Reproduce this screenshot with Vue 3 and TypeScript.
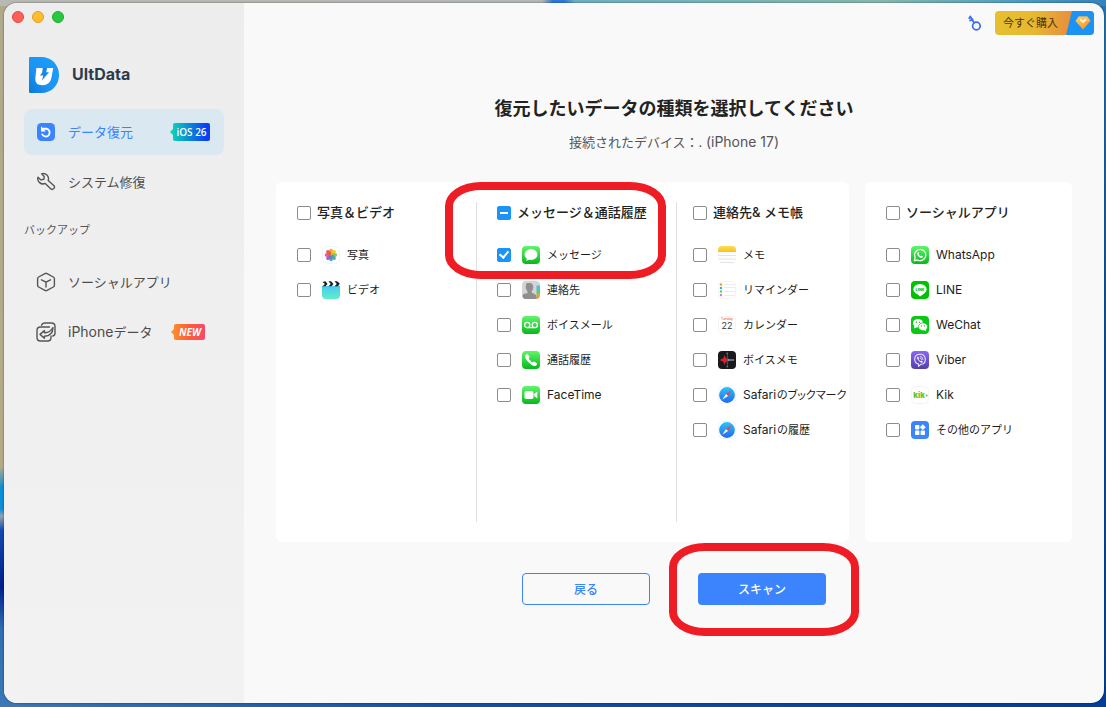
<script setup lang="ts">
import { reactive } from 'vue'

interface Item {
  id: string
  label: string
  latin?: string
  compact?: boolean
  checked: boolean
}
interface Group {
  id: string
  title: string
  partial: boolean
  marked: boolean
  items: Item[]
}

const item = (id: string, label: string, latin = '', checked = false, compact = false): Item => ({
  id,
  label,
  latin,
  checked,
  compact,
})

const cards = reactive<{ id: string; groups: Group[] }[]>([
  {
    id: 'device',
    groups: [
      {
        id: 'media',
        title: '写真＆ビデオ',
        partial: false,
        marked: false,
        items: [item('photos', '写真'), item('videos', 'ビデオ')],
      },
      {
        id: 'calls',
        title: 'メッセージ＆通話履歴',
        partial: true,
        marked: true,
        items: [
          item('messages', 'メッセージ', '', true),
          item('contacts', '連絡先'),
          item('voicemail', 'ボイスメール'),
          item('phone', '通話履歴'),
          item('facetime', '', 'FaceTime'),
        ],
      },
      {
        id: 'notes',
        title: '連絡先& メモ帳',
        partial: false,
        marked: false,
        items: [
          item('memo', 'メモ'),
          item('reminders', 'リマインダー'),
          item('calendar', 'カレンダー'),
          item('voicememo', 'ボイスメモ'),
          item('bookmarks', 'のブックマーク', 'Safari', false, true),
          item('history', 'の履歴', 'Safari'),
        ],
      },
    ],
  },
  {
    id: 'social',
    groups: [
      {
        id: 'apps',
        title: 'ソーシャルアプリ',
        partial: false,
        marked: false,
        items: [
          item('whatsapp', '', 'WhatsApp'),
          item('line', '', 'LINE'),
          item('wechat', '', 'WeChat'),
          item('viber', '', 'Viber'),
          item('kik', '', 'Kik'),
          item('others', 'その他のアプリ'),
        ],
      },
    ],
  },
])

const petals = [
  { angle: 0, color: '#f9a11b' },
  { angle: 45, color: '#e8c81e' },
  { angle: 90, color: '#8cc63f' },
  { angle: 135, color: '#3fae8a' },
  { angle: 180, color: '#4a8fe0' },
  { angle: 225, color: '#8a5fc4' },
  { angle: 270, color: '#d8589c' },
  { angle: 315, color: '#f0533a' },
]
</script>

<template>
  <div class="desktop">
    <svg class="defs" width="0" height="0" aria-hidden="true">
      <defs>
        <linearGradient id="green" x1="0" y1="0" x2="0" y2="1">
          <stop offset="0" stop-color="#62f56c" />
          <stop offset="1" stop-color="#08b81c" />
        </linearGradient>
        <linearGradient id="violet" x1="0" y1="0" x2="0" y2="1">
          <stop offset="0" stop-color="#8a66f5" />
          <stop offset="1" stop-color="#553fa8" />
        </linearGradient>
        <linearGradient id="sky" x1="0" y1="0" x2="0" y2="1">
          <stop offset="0" stop-color="#2cc4fb" />
          <stop offset="1" stop-color="#2269ee" />
        </linearGradient>
        <linearGradient id="aqua" x1="0" y1="0" x2="0" y2="1">
          <stop offset="0" stop-color="#4cc8f0" />
          <stop offset="1" stop-color="#5cf0c8" />
        </linearGradient>
        <linearGradient id="yellow" x1="0" y1="0" x2="0" y2="1">
          <stop offset="0" stop-color="#ffdc50" />
          <stop offset="1" stop-color="#fbc31c" />
        </linearGradient>
        <linearGradient id="brand" x1="1" y1="0" x2="0" y2="1">
          <stop offset="0" stop-color="#1ba0fb" />
          <stop offset="0.6" stop-color="#1b93f5" />
          <stop offset="1" stop-color="#0d78d8" />
        </linearGradient>
        <linearGradient id="gem" x1="0" y1="0" x2="1" y2="1">
          <stop offset="0" stop-color="#ffd35c" />
          <stop offset="1" stop-color="#f58a1c" />
        </linearGradient>
      </defs>
    </svg>

    <div class="window">
      <aside class="sidebar">
        <div class="lights">
          <button type="button" class="light red" aria-label="閉じる"></button>
          <button type="button" class="light amber" aria-label="しまう"></button>
          <button type="button" class="light lime" aria-label="拡大"></button>
        </div>

        <div class="brand">
          <svg width="30" height="36" viewBox="0 0 30 36" aria-hidden="true">
            <path d="M1 0H12C23 0 30 8 30 18S23 36 12 36H1Q0 36 0 35V1Q0 0 1 0Z" fill="url(#brand)" />
            <path
              d="M7.400 11H24.200L22.400 21Q20.800 28.300 13.600 28.300 5.800 28.300 6.300 21.500Z"
              fill="#fff"
            />
            <path d="M13.800 10.500H18.200L17.200 15.200H20L12.800 23.800 14.400 18.600H11L13.200 15.500Z" fill="#1788e8" />
          </svg>
          <span>UltData</span>
        </div>

        <nav class="nav">
          <a href="#recover" class="nav-item active">
            <svg width="20" height="20" viewBox="0 0 20 20" aria-hidden="true">
              <rect x="1" y="1" width="18" height="18" rx="4.500" fill="#3b84fe" />
              <path d="M7 6.800H10.500A3.900 3.900 0 1 1 6.300 12.400" fill="none" stroke="#fff" stroke-width="1.900" stroke-linecap="round" />
              <path d="M5 4.200V9.400H9.800Z" fill="#fff" />
            </svg>
            <span class="nav-text">データ復元</span>
            <span class="tag ios">iOS 26</span>
          </a>
          <a href="#repair" class="nav-item">
            <svg width="20" height="20" viewBox="0 0 20 20" class="line-icon" aria-hidden="true">
              <path
                d="M5.600 1.800A5.200 5.200 0 0 1 12.200 8.400L18 13.700Q19 14.900 18 16.400 16.700 17.900 15.200 17.200L9.200 11.400A5.200 5.200 0 0 1 2 5.200L4.900 7.900 7.900 7.200 8.200 4.500Z"
              />
            </svg>
            <span class="nav-text">システム修復</span>
          </a>
          <h2 class="section">バックアップ</h2>
          <a href="#social" class="nav-item">
            <svg width="20" height="20" viewBox="0 0 20 20" class="line-icon" aria-hidden="true">
              <path d="M8.900 1.600Q10 1 11.100 1.600L17.300 5Q18.400 5.600 18.400 6.800V13.200Q18.400 14.400 17.300 15L11.100 18.400Q10 19 8.900 18.400L2.700 15Q1.600 14.400 1.600 13.200V6.800Q1.600 5.600 2.700 5Z" />
              <path d="M5.500 7.800L10 10.200 14.500 7.800M10 10.200V15" />
            </svg>
            <span class="nav-text">ソーシャルアプリ</span>
          </a>
          <a href="#iphone" class="nav-item">
            <svg width="20" height="20" viewBox="0 0 20 20" class="line-icon" aria-hidden="true">
              <path d="M5.500 3.200Q6.200 1 8.500 1H15.500Q19 1 19 4.500V11Q19 13.500 16.800 14" />
              <path d="M13.500 5H4.500Q1 5 1 8.500V15.500Q1 19 4.500 19H11.500Q15 19 15 15.500V14" />
              <path d="M4 12.400L8.400 8.600V10.700Q13.800 11 17 5.500 16.800 14 8.400 14.200V16.200Z" />
            </svg>
            <span class="nav-text"><span class="latin">iPhone</span>データ</span>
            <span class="tag new">NEW</span>
          </a>
        </nav>
      </aside>

      <main class="main">
        <header class="toolbar">
          <button type="button" class="key" aria-label="登録">
            <svg width="16" height="18" viewBox="0 0 16 18" aria-hidden="true">
              <g fill="none" stroke="#3a6df0" stroke-width="1.700" stroke-linecap="round">
                <circle cx="9.400" cy="12" r="3.800" />
                <path d="M7 8.800L3.300 2.500M3.300 2.500L2.200 4.300M5.700 5.200L3 6.600" />
              </g>
            </svg>
          </button>
          <button type="button" class="buy">
            <span class="buy-text">今すぐ購入</span>
            <span class="buy-gem">
              <svg width="16" height="14" viewBox="0 0 16 14" aria-hidden="true">
                <path d="M3.600 0.500H12.400L15.500 5 8 13.500 0.500 5Z" fill="url(#gem)" />
                <path d="M3.600 0.500H12.400L15.500 5H11L8 8Z" fill="#ffc46a" opacity="0.600" />
                <path d="M5.500 3.600L8 6 10.500 3.600" fill="none" stroke="#fff" stroke-width="1.500" stroke-linecap="round" />
              </svg>
            </span>
          </button>
        </header>

        <h1>復元したいデータの種類を選択してください</h1>
        <p class="subtitle">接続されたデバイス：. <span class="latin">(iPhone 17)</span></p>

        <div class="cards">
          <section v-for="card in cards" :key="card.id" class="card" :class="card.id">
            <div v-for="group in card.groups" :key="group.id" class="group" :class="group.id">
              <label class="row head">
                <input type="checkbox" :indeterminate.prop="group.partial" />
                <span class="title">{{ group.title }}</span>
              </label>
              <label v-for="entry in group.items" :key="entry.id" class="row">
                <input v-model="entry.checked" type="checkbox" />
                <svg class="app" width="18" height="18" viewBox="0 0 18 18" aria-hidden="true">
                  <g v-if="entry.id === 'photos'">
                    <rect x="0.500" y="0.500" width="17" height="17" rx="4" fill="#fff" stroke="#f4f4f4" />
                    <ellipse
                      v-for="petal in petals"
                      :key="petal.angle"
                      cx="9"
                      cy="5.700"
                      rx="1.900"
                      ry="2.900"
                      :fill="petal.color"
                      opacity="0.920"
                      :transform="`rotate(${petal.angle} 9 9)`"
                    />
                  </g>
                  <g v-else-if="entry.id === 'videos'">
                    <path d="M0 5H18V14Q18 18 14 18H4Q0 18 0 14Z" fill="url(#aqua)" />
                    <path d="M0 3Q0 0 3 0H15Q18 0 18 3V5H0Z" fill="#fff" />
                    <path d="M0.500 1L3.500 0.300 5.500 3 3.500 5.300H0.500L3 3ZM6.500 0.300H9L11.500 3 9.500 5.300H6.500L8.800 3ZM12.500 0.300H15L17.800 2.500 16 5.300H12.500L14.800 3Z" fill="#1c1c1c" />
                  </g>
                  <g v-else-if="entry.id === 'messages'">
                    <rect width="18" height="18" rx="4" fill="url(#green)" />
                    <ellipse cx="9" cy="8.500" rx="6.500" ry="5.400" fill="#fff" />
                    <path d="M4.800 11.500Q5.200 13.800 3.800 14.800 6.300 14.800 7.500 13Z" fill="#fff" />
                  </g>
                  <g v-else-if="entry.id === 'contacts'">
                    <rect width="18" height="18" rx="4" fill="#d4d4d4" />
                    <path d="M14.500 4.500H18V9H14.500Z" fill="#52b8f0" />
                    <path d="M14.500 9H18V13.500H14.500Z" fill="#58cf68" />
                    <path d="M14.500 13.500H18V14Q18 17 14.500 18Z" fill="#f79a20" />
                    <path d="M7.500 2C10.300 2 11.400 4 11.300 6.400 11.200 8.600 9.700 9.800 9.500 11 9.400 12.300 13.500 12.300 14.500 15V18H4Q0.500 18 0.500 14.500 1.500 12.300 5.500 12.300 5.400 11 5.300 9.800 3.800 8.600 3.700 6.400 3.600 4 4.700 2 7.500 2Z" fill="#8f8f8f" />
                  </g>
                  <g v-else-if="entry.id === 'voicemail'">
                    <rect width="18" height="18" rx="4" fill="url(#green)" />
                    <g fill="none" stroke="#fff" stroke-width="1.300">
                      <circle cx="5.200" cy="9" r="2.600" />
                      <circle cx="12.800" cy="9" r="2.600" />
                      <path d="M5.200 11.600H12.800" />
                    </g>
                  </g>
                  <g v-else-if="entry.id === 'phone'">
                    <rect width="18" height="18" rx="4" fill="url(#green)" />
                    <path d="M4 3.500Q5.200 2.500 6.200 3.700L7.400 5.500Q7.800 6.300 7 7.100 6.600 7.700 7.200 8.500L9.800 11Q10.500 11.500 11.200 11 11.900 10.300 12.700 10.800L14.500 12Q15.600 12.900 14.600 14 13 15.800 9.700 13.900 6 11.700 4 8.300 2.400 5.200 4 3.500Z" fill="#fff" />
                  </g>
                  <g v-else-if="entry.id === 'facetime'">
                    <rect width="18" height="18" rx="4" fill="url(#green)" />
                    <rect x="2.500" y="5" width="9" height="8" rx="1.800" fill="#fff" />
                    <path d="M12.200 8L15.300 5.600V12.400L12.200 10Z" fill="#fff" />
                  </g>
                  <g v-else-if="entry.id === 'memo'">
                    <path d="M0 5H18V14Q18 18 14 18H4Q0 18 0 14Z" fill="#fdfdfd" />
                    <path d="M0 6V4Q0 0 4 0H14Q18 0 18 4V6Z" fill="url(#yellow)" />
                    <path d="M0 9.500H18M0 13H18M2 16.500H16" stroke="#e4e4e4" />
                  </g>
                  <g v-else-if="entry.id === 'reminders'">
                    <rect x="0.500" y="0.500" width="17" height="17" rx="4" fill="#fff" stroke="#f4f4f4" />
                    <path d="M6 3.500H17M6 6.500H17M6 10.500H17M6 14.500H17" stroke="#ececec" />
                    <circle cx="3" cy="3.500" r="1.200" fill="#f59a23" />
                    <circle cx="3" cy="7" r="1.200" fill="#35a9f0" />
                    <circle cx="3" cy="10.500" r="1.200" fill="#5fd04a" />
                    <circle cx="3" cy="14" r="1.200" fill="#cc7be6" />
                  </g>
                  <g v-else-if="entry.id === 'calendar'">
                    <rect x="0.500" y="0.500" width="17" height="17" rx="4" fill="#fff" stroke="#f4f4f4" />
                    <text x="9" y="4" text-anchor="middle" class="cal-day">Tuesday</text>
                    <text x="9" y="13" text-anchor="middle" class="cal-num">22</text>
                  </g>
                  <g v-else-if="entry.id === 'voicememo'">
                    <rect width="18" height="18" rx="4" fill="#1a1a1c" />
                    <path d="M2 9L4 7.500 5 8 6.500 4 7.500 6.500 9 8V10L7.500 11.500 6.500 14 5 10 4 10.500Z" fill="#e0222c" />
                    <path d="M9.500 7.500L12 8.300H16V9.700H12L9.500 10.500Z" fill="#8a8a8e" />
                    <path d="M9.300 2V16" stroke="#2b7f98" stroke-width="0.800" />
                    <circle cx="9.300" cy="2.200" r="0.800" fill="#2b9fb8" />
                    <circle cx="9.300" cy="15.800" r="0.800" fill="#2b9fb8" />
                  </g>
                  <g v-else-if="entry.id === 'bookmarks' || entry.id === 'history'">
                    <rect x="0.500" y="0.500" width="17" height="17" rx="4" fill="#fff" stroke="#f4f4f4" />
                    <circle cx="9" cy="9" r="7.900" fill="url(#sky)" />
                    <path d="M13.700 4.300L8 8 10 10Z" fill="#f2413a" />
                    <path d="M4.300 13.700L8 8 10 10Z" fill="#fff" />
                  </g>
                  <g v-else-if="entry.id === 'whatsapp'">
                    <rect width="18" height="18" rx="4" fill="url(#green)" />
                    <path d="M3.200 14.800L4.200 11.600A5.600 5.600 0 1 1 6.400 13.900Z" fill="none" stroke="#fff" stroke-width="1.200" stroke-linejoin="round" />
                    <path d="M6.600 6.200Q7.300 5.600 7.700 6.400L8.100 7.500 7.600 8.300Q8.300 9.700 9.700 10.300L10.500 9.600 11.800 10.200Q12.200 10.700 11.600 11.400 10.300 12.500 8.100 10.900 5.100 8.200 6.600 6.200Z" fill="#fff" />
                  </g>
                  <g v-else-if="entry.id === 'line'">
                    <rect width="18" height="18" rx="4" fill="#00c200" />
                    <ellipse cx="9" cy="8.300" rx="6.600" ry="5.200" fill="#fff" />
                    <path d="M5.500 12L9 15.500Q13 13.200 14.500 10.500Z" fill="#fff" />
                    <text x="9" y="9.700" text-anchor="middle" class="line-mark">LINE</text>
                  </g>
                  <g v-else-if="entry.id === 'wechat'">
                    <rect width="18" height="18" rx="4" fill="#0ac814" />
                    <ellipse cx="7" cy="7.300" rx="5" ry="4.200" fill="#fff" />
                    <path d="M3.500 9.500L3 12.500 6 11Z" fill="#fff" />
                    <ellipse cx="12" cy="10.800" rx="4.600" ry="3.900" fill="#fff" stroke="#0ac814" stroke-width="0.700" />
                    <path d="M13 14L15 15.300 14.800 13Z" fill="#fff" />
                    <circle cx="5.400" cy="6.200" r="0.700" fill="#0ac814" />
                    <circle cx="8.600" cy="6.200" r="0.700" fill="#0ac814" />
                    <circle cx="10.600" cy="9.900" r="0.600" fill="#0ac814" />
                    <circle cx="13.400" cy="9.900" r="0.600" fill="#0ac814" />
                  </g>
                  <g v-else-if="entry.id === 'viber'">
                    <rect width="18" height="18" rx="4" fill="url(#violet)" />
                    <path d="M9 3.200C13.300 3.200 14.300 5 14.300 8.300S13 13.300 9.800 13.300L7.600 15.300V13.100C4.600 12.500 3.700 11.200 3.700 8.300S5 3.200 9 3.200Z" fill="none" stroke="#e9e2ff" stroke-width="1.100" stroke-linejoin="round" />
                    <path d="M6.300 6Q7 5.300 7.500 6.200L8 7.200 7.400 8Q8 9.500 9.600 10.200L10.400 9.600 11.700 10.500Q12 11.100 11.300 11.600 10 12 8 10 5.500 7.500 6.300 6Z" fill="#fff" />
                    <path d="M9.200 5.400Q12 5.600 12.100 8.600M9.300 7Q10.500 7.100 10.600 8.500" fill="none" stroke="#fff" stroke-width="0.700" stroke-linecap="round" />
                  </g>
                  <g v-else-if="entry.id === 'kik'">
                    <rect x="0.500" y="0.500" width="17" height="17" rx="4" fill="#fff" stroke="#f4f4f4" />
                    <text x="8.200" y="12" text-anchor="middle" class="kik-mark">kik</text>
                    <circle cx="15.600" cy="9.500" r="1" fill="#62c11c" />
                  </g>
                  <g v-else>
                    <rect width="18" height="18" rx="4" fill="#3b84fe" />
                    <rect x="4" y="4" width="4.400" height="4.400" rx="0.800" fill="#fff" />
                    <rect x="4" y="9.600" width="4.400" height="4.400" rx="0.800" fill="#fff" />
                    <rect x="9.600" y="9.600" width="4.400" height="4.400" rx="0.800" fill="#fff" />
                    <path d="M11.800 3.300L14.700 6.200 11.800 9.100 8.900 6.200Z" fill="#fff" />
                  </g>
                </svg>
                <span class="name" :class="{ compact: entry.compact }">
                  <span v-if="entry.latin" class="latin">{{ entry.latin }}</span>{{ entry.label }}
                </span>
              </label>
              <span v-if="group.marked" class="ring around-group"></span>
            </div>
          </section>
        </div>

        <footer class="actions">
          <button type="button" class="btn ghost">戻る</button>
          <button type="button" class="btn primary">
            スキャン
            <span class="ring around-button"></span>
          </button>
        </footer>
      </main>
    </div>
  </div>
</template>

<style>
html,
body {
  margin: 0;
}
</style>

<style scoped>
* {
  box-sizing: border-box;
}
.desktop {
  min-height: 100vh;
  display: flex;
  padding: 3px 2px 4px 4px;
  font-family: Inter, 'Noto Sans CJK JP', sans-serif;
  color: #222;
  background:
    linear-gradient(to right, #b9b9b3, #b4b8b6 49%, #2f78d8 50%, #2f78d8 51%, #6fb0c0 52%, #86b8ac 80%, #4f9fc0 92%, #3583bd) top / 100% 6px no-repeat,
    linear-gradient(to bottom, #b0aa8c, #b5ab85 66%, #0a8fd8 69%, #0a8fd8 72%, #93a5ac 73%, #1549b4 75%, #001f8e 83%, #2f6fb4 89%, #3a78b8) left / 20px 100% no-repeat,
    linear-gradient(to right, #3a78b8, #1452a8 40%, #013d9c) bottom / 100% 20px no-repeat,
    linear-gradient(to bottom, #2477b4, #0a4fa0 50%, #03449c);
}
.defs {
  position: absolute;
}
button {
  font-family: inherit;
  padding: 0;
  border: 0;
  background: none;
  cursor: pointer;
}
.window {
  flex: 1;
  display: flex;
  border-radius: 13px;
  overflow: hidden;
  background: #f9f9f9;
  box-shadow: 0 0 2px rgba(0, 0, 0, 0.6);
}
.sidebar {
  width: 240px;
  flex: none;
  padding: 8px 20px;
  background: linear-gradient(#ededed, #f2f2f2);
}
.lights {
  display: flex;
  gap: 8px;
  margin-left: -12px;
}
.light {
  width: 12px;
  height: 12px;
  border-radius: 50%;
  border: 1px solid;
}
.red {
  background: #ff5f57;
  border-color: #e2463f;
}
.amber {
  background: #febc2e;
  border-color: #e0a023;
}
.lime {
  background: #28c840;
  border-color: #1dad2b;
}
.brand {
  display: flex;
  align-items: center;
  gap: 13px;
  height: 36px;
  margin: 34px 0 16px 5px;
  font-size: 16px;
  line-height: 20px;
  font-weight: 700;
  color: #2b3c4e;
}
.brand span,
.title {
  padding-bottom: 2px;
}
.nav {
  display: flex;
  flex-direction: column;
  gap: 4px;
}
.nav-item {
  display: flex;
  align-items: center;
  height: 46px;
  padding: 0 14px 0 12px;
  border-radius: 8px;
  font-size: 13px;
  line-height: 20px;
  color: #4c4c4c;
  text-decoration: none;
}
.nav-item.active {
  background: #d9e8f1;
  color: #3b84fe;
}
.nav-text {
  margin-left: 12px;
  white-space: nowrap;
}
.nav-text .latin,
.subtitle .latin {
  font-size: 14px;
}
.line-icon {
  fill: none;
  stroke: #555;
  stroke-width: 1.4;
  stroke-linejoin: round;
  stroke-linecap: round;
}
.section {
  margin: 0;
  height: 46px;
  line-height: 42px;
  font-size: 11px;
  font-weight: 400;
  color: #555;
}
.tag {
  position: relative;
  color: #fff;
  text-align: center;
  border-radius: 2px;
  font-family: 'Open Sans', sans-serif;
  font-size: 10px;
  font-weight: 600;
}
.tag::before {
  content: '';
  position: absolute;
  left: -3px;
  top: 50%;
  margin-top: -3px;
  border: 3px solid transparent;
  border-left: 0;
}
.ios {
  margin-left: auto;
  width: 37px;
  height: 18px;
  line-height: 18px;
  background: linear-gradient(to right, #0ccfb8, #0a3ff5 90%);
}
.ios::before {
  border-right-color: #0ccfb8;
}
.new {
  margin-left: 22px;
  width: 31px;
  height: 16px;
  line-height: 16px;
  font-style: italic;
  font-weight: 700;
  background: linear-gradient(to right, #fd8a2b, #fd5a3c 50%, #fb4a68);
}
.new::before {
  border-right-color: #fd8a2b;
}
.main {
  flex: 1;
  min-width: 0;
  padding: 8px 32px 32px;
  display: flex;
  flex-direction: column;
}
.toolbar {
  display: flex;
  justify-content: flex-end;
  align-items: center;
  gap: 12px;
  margin-right: -22px;
}
.key {
  width: 16px;
  height: 18px;
}
.key svg {
  display: block;
}
.buy {
  display: flex;
  width: 99px;
  height: 24px;
  border-radius: 4px;
  overflow: hidden;
  background: linear-gradient(100deg, #e6c02e, #e6b832 40%, #e88f3c 75%);
}
.buy-text {
  flex: 1;
  font-size: 11px;
  line-height: 24px;
  color: #4c3206;
  white-space: nowrap;
}
.buy-gem {
  width: 28px;
  height: 24px;
  padding: 5px 0 0 9px;
  background: #1b93f5;
  clip-path: polygon(6px 0, 100% 0, 100% 100%, 0 100%);
}
.buy-gem svg {
  display: block;
}
h1 {
  margin: 60px 0 0;
  font-size: 18px;
  line-height: 28px;
  font-weight: 700;
  text-align: center;
}
.subtitle {
  margin: 9px 0 0;
  font-size: 13px;
  line-height: 20px;
  text-align: center;
  color: #555;
}
.cards {
  display: grid;
  grid-template-columns: 573fr 207fr;
  gap: 16px;
  margin-top: 30px;
  min-height: 360px;
}
.card {
  display: grid;
  padding: 20px 0;
  border-radius: 6px;
  background: #fff;
}
.card.device {
  grid-template-columns: 200fr 200fr 173fr;
}
.group {
  position: relative;
  padding-left: 21px;
}
.calls,
.notes {
  border-left: 1px solid #e0e0e0;
  padding-left: 20px;
}
.notes {
  padding-left: 16px;
}
.row {
  display: flex;
  align-items: center;
  height: 35px;
  white-space: nowrap;
}
.head {
  height: 22px;
  margin-bottom: 13px;
  gap: 6px;
  font-size: 13px;
  line-height: 20px;
  font-weight: 500;
  color: #222;
}
input {
  appearance: none;
  flex: none;
  display: grid;
  place-items: center;
  width: 14px;
  height: 14px;
  margin: 0;
  border: 1px solid #8c8c8c;
  border-radius: 2px;
  background: #fff;
}
input:checked,
input:indeterminate {
  border-color: #1b93f7;
  background: #1b93f7;
}
input:indeterminate::after {
  content: '';
  width: 8px;
  height: 2px;
  background: #fff;
}
input:checked::after {
  content: '';
  width: 4px;
  height: 7px;
  margin-bottom: 2px;
  border: solid #fff;
  border-width: 0 2px 2px 0;
  transform: rotate(40deg);
}
.app {
  flex: none;
  margin: 0 7px 0 11px;
}
.name {
  font-size: 11px;
  line-height: 20px;
  color: #1c1c1c;
}
.name .latin {
  margin-right: 1px;
  font-size: 12px;
}
.name.compact {
  font-feature-settings: 'palt';
}
.cal-day {
  font-size: 3px;
  fill: #e8453c;
}
.cal-num {
  font-size: 9px;
  fill: #333;
}
.line-mark {
  font-size: 4px;
  font-weight: 800;
  fill: #00c200;
}
.kik-mark {
  font-size: 8px;
  font-weight: 800;
  fill: #62c11c;
}
.actions {
  display: flex;
  justify-content: center;
  gap: 48px;
  margin-top: 31px;
}
.btn {
  position: relative;
  width: 128px;
  height: 32px;
  padding-top: 2px;
  border-radius: 4px;
  font-size: 12px;
  line-height: 20px;
  font-weight: 500;
}
.ghost {
  border: 1px solid #3b84fe;
  color: #3b84fe;
}
.primary {
  background: #3b84fe;
  color: #fff;
}
.ring {
  position: absolute;
  z-index: 2;
  border: 8px solid #ee1c24;
  border-radius: 36px / 24px;
  pointer-events: none;
}
.around-group {
  top: -20px;
  left: -32px;
  right: 10px;
  height: 97px;
}
.around-button {
  inset: -30px -33px -31px -29px;
}
</style>
